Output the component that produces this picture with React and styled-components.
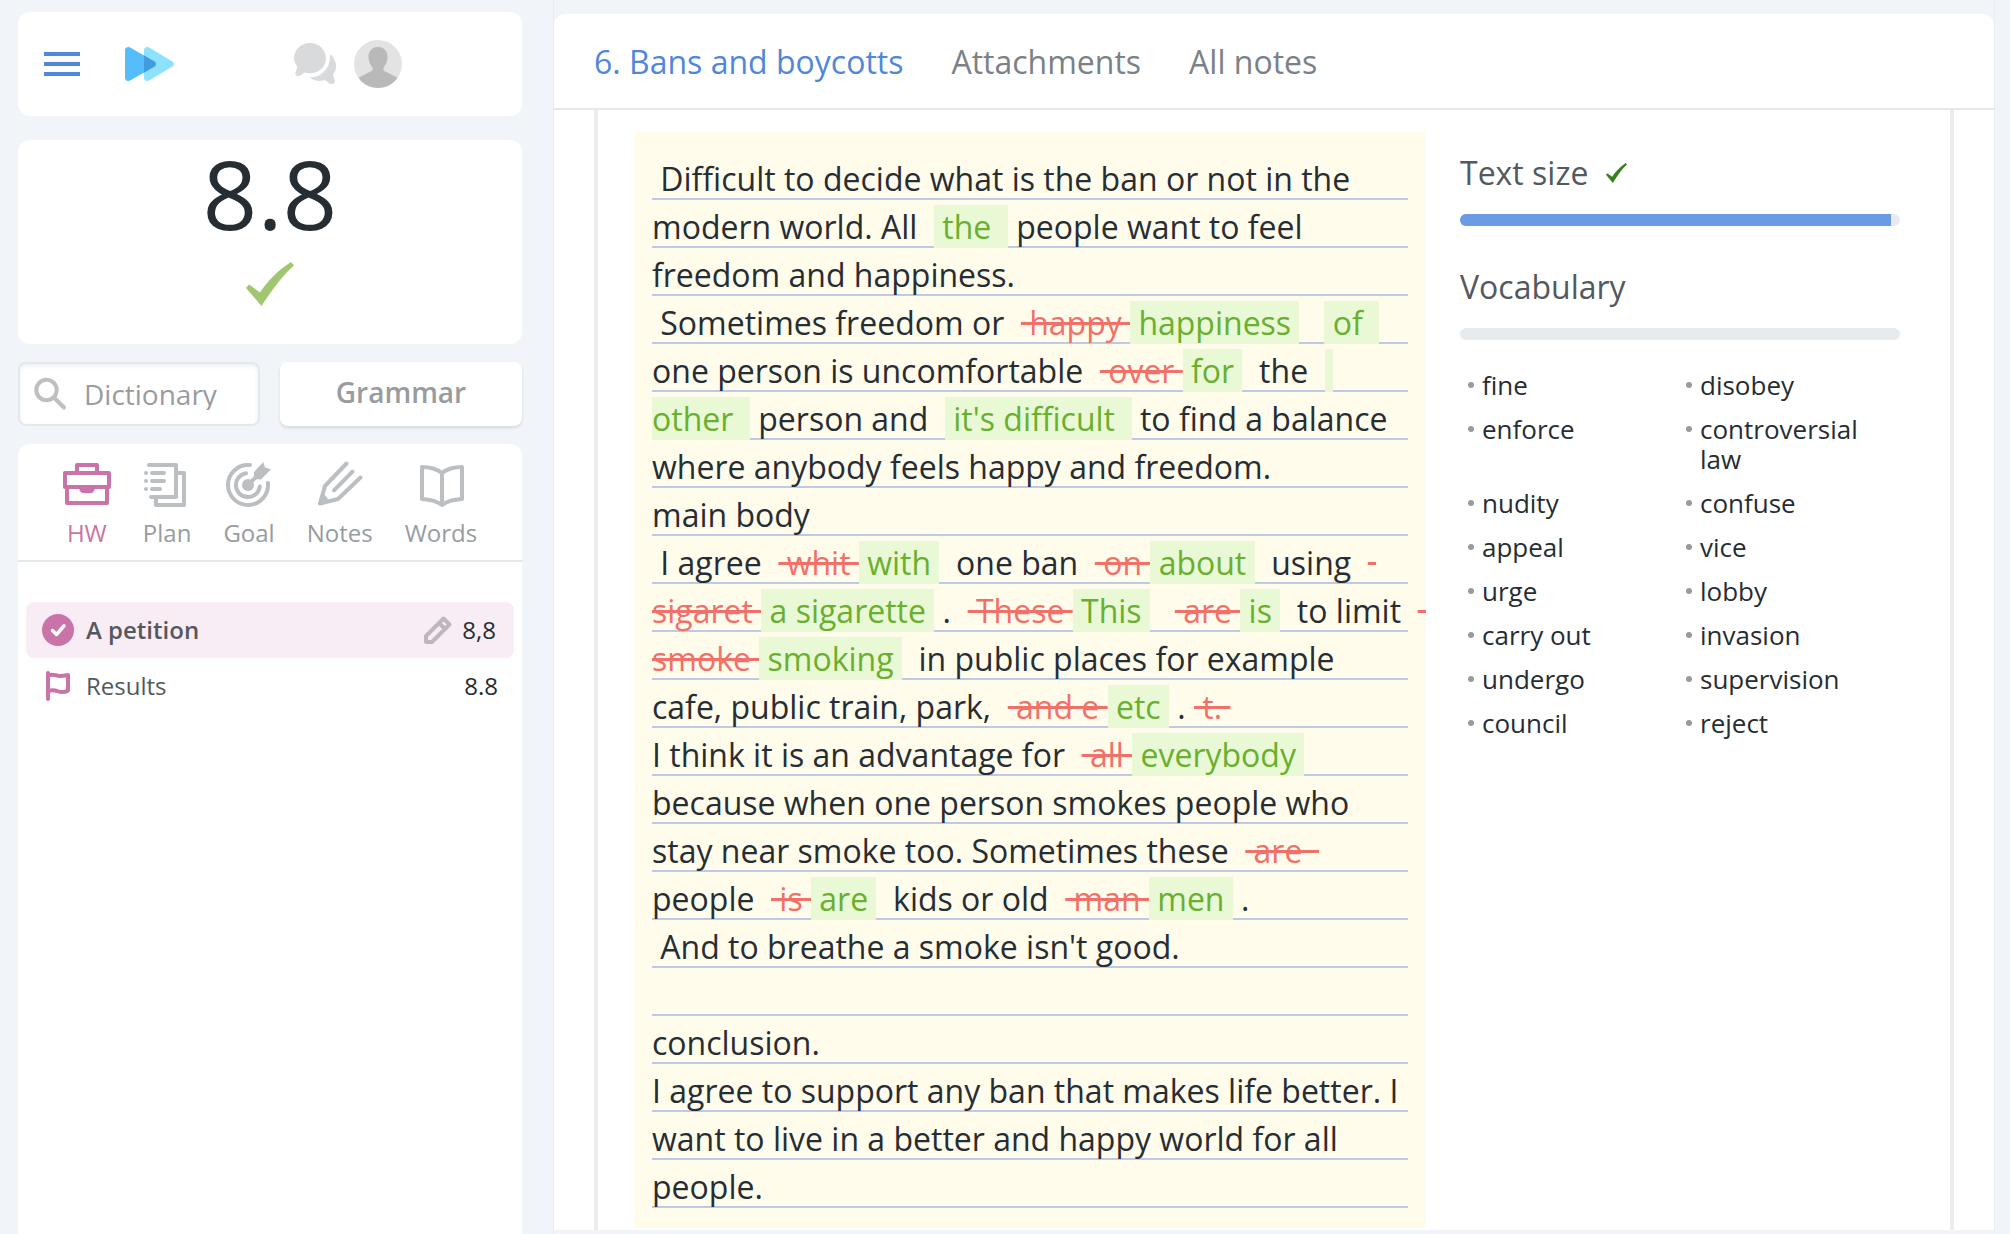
import React from "react";
import styled, { createGlobalStyle } from "styled-components";

const color = {
  page: "#f1f5fa",
  ink: "#262d33",
  heading: "#53595d",
  muted: "#989c9f",
  icon: "#bbbfc2",
  tab: "#7b8186",
  blue: "#5087d8",
  pink: "#c973a9",
  rule: "#e3e8ed",
};

const GlobalStyle = createGlobalStyle`
  *, *::before, *::after { box-sizing: border-box; }
  body {
    margin: 0;
    background: ${color.page};
    color: ${color.ink};
    font-family: "Open Sans", "Noto Sans", sans-serif;
    font-size: 24px;
    line-height: 32px;
  }
  button, input { font: inherit; color: inherit; }
  button { border: 0; padding: 0; background: none; cursor: pointer; }
  a { color: inherit; text-decoration: none; }
  ul { list-style: none; margin: 0; padding: 0; }
  svg { display: block; flex: none; }
`;

/* ---------- layout ---------- */

const Page = styled.div`
  display: grid;
  grid-template-columns: 553px minmax(0, 1fr);
  height: 100vh;
  overflow: hidden;
`;

const Sidebar = styled.aside`
  display: flex;
  flex-direction: column;
  padding: 12px 31px 0 18px;
  min-height: 0;
`;

const Card = styled.section`
  background: #fff;
  border-radius: 12px;
`;

const TopBar = styled(Card).attrs({ as: "header" })`
  display: flex;
  align-items: center;
  height: 104px;
  padding: 0 120px 0 26px;
  margin-bottom: 24px;
`;

const LogoLink = styled.a`
  margin-left: 45px;
`;

const UserActions = styled.div`
  display: flex;
  align-items: center;
  gap: 18px;
  margin-left: auto;
`;

const ScoreCard = styled(Card)`
  display: flex;
  flex-direction: column;
  align-items: center;
  gap: 16px;
  height: 204px;
  margin-bottom: 18px;
`;

const Score = styled.strong`
  font-size: 96px;
  font-weight: 400;
  line-height: 106px;
`;

const Tools = styled.div`
  display: grid;
  grid-template-columns: repeat(2, minmax(0, 1fr));
  gap: 20px;
  margin-bottom: 18px;
`;

const SearchBox = styled.label`
  display: flex;
  align-items: center;
  gap: 16px;
  height: 64px;
  padding: 0 12px 0 14px;
  border: 2px solid ${color.rule};
  border-radius: 8px;
  background: #fff;
  box-shadow: inset 0 2px 4px rgba(38, 45, 51, 0.08);
  font-size: 28px;
`;

const SearchInput = styled.input`
  flex: 1;
  min-width: 0;
  padding: 0;
  border: 0;
  outline: 0;
  background: none;
  &::placeholder { color: ${color.muted}; opacity: 1; }
`;

const GrammarButton = styled.button`
  height: 64px;
  padding-bottom: 4px;
  border-radius: 8px;
  background: #fff;
  box-shadow: 0 2px 3px rgba(38, 45, 51, 0.14);
  color: ${color.muted};
  font-size: 28px;
  font-weight: 600;
`;

const LessonCard = styled(Card)`
  flex: 1;
  border-radius: 12px 12px 0 0;
`;

const LessonNav = styled.nav`
  display: flex;
  justify-content: center;
  gap: 32px;
  padding: 17px 0 11px;
  border-bottom: 2px solid ${color.rule};
`;

const LessonTab = styled.button`
  display: flex;
  flex-direction: column;
  align-items: center;
  gap: 8px;
  color: ${(p) => (p.$active ? color.pink : color.muted)};
  line-height: 32px;
  svg { color: ${(p) => (p.$active ? color.pink : color.icon)}; }
`;

const TaskList = styled.ul`
  padding: 40px 8px 0;
`;

const Task = styled.a`
  display: flex;
  align-items: center;
  height: 56px;
  padding: 0 ${(p) => (p.$active ? 18 : 16)}px 0 16px;
  border-radius: 8px;
  background: ${(p) => (p.$active ? "#f9edf5" : "transparent")};
`;

const TaskName = styled.span`
  flex: 1;
  padding-left: 12px;
  color: ${color.heading};
  font-weight: ${(p) => (p.$active ? 600 : 400)};
`;

const TaskScore = styled.span`
  padding-left: 10px;
  color: ${color.ink};
`;

/* ---------- main area ---------- */

const Main = styled.main`
  display: flex;
  flex-direction: column;
  min-width: 0;
  min-height: 0;
  margin-right: 15px;
  padding: 14px 0 4px;
  border: solid #e9edf3;
  border-width: 0 1px;
`;

const TabBar = styled.nav`
  display: flex;
  align-items: center;
  gap: 48px;
  height: 96px;
  padding: 2px 40px 0;
  border-bottom: 2px solid ${color.rule};
  border-radius: 12px 12px 0 0;
  background: #fff;
  font-size: 32px;
  line-height: 44px;
`;

const TabLink = styled.a`
  color: ${(p) => (p.$active ? color.blue : color.tab)};
`;

const Scroller = styled.div`
  flex: 1;
  min-height: 0;
  overflow: hidden;
  padding: 0 40px;
  background: #fff;
`;

const Work = styled.article`
  display: flex;
  align-items: flex-start;
  gap: 34px;
  min-height: 100%;
  padding: 22px 50px 0 36px;
  border: solid #ececec;
  border-width: 0 4px;
`;

const Paper = styled.div`
  flex: 1;
  min-width: 0;
  padding: 23px 18px 17px;
  background-color: #fffcec;
  background-image: repeating-linear-gradient(
    transparent 0 43px,
    #bccae4 43px 45px,
    transparent 45px 48px
  );
  background-origin: content-box;
  background-size: 100% 100%;
  background-repeat: no-repeat;
  font-size: 32px;
  line-height: 48px;
`;

const Paragraph = styled.p`
  margin: 0;
  min-height: 48px;
  white-space: pre-wrap;
`;

const Added = styled.ins`
  background: #e9f9d6;
  color: #6aaf2e;
  text-decoration: none;
`;

const Removed = styled.del`
  color: #f0716a;
`;

const Stats = styled.aside`
  flex: 0 0 440px;
  padding-top: 18px;
`;

const StatTitle = styled.h2`
  display: flex;
  align-items: center;
  gap: 18px;
  margin: 0 0 18px;
  color: ${color.heading};
  font-size: 32px;
  font-weight: 400;
  line-height: 46px;
`;

const Track = styled.div`
  height: 12px;
  margin-bottom: ${(p) => (p.$last ? 30 : 38)}px;
  border-radius: 6px;
  background: #e7ebee;
  overflow: hidden;
`;

const Fill = styled.div`
  height: 100%;
  background: #6a9be4;
`;

const WordList = styled.ul`
  display: grid;
  grid-template-columns: 1fr 1fr;
  row-gap: 14px;
  padding-left: 4px;
  font-size: 26px;
  line-height: 30px;
`;

const Word = styled.li`
  display: flex;
  gap: 8px;
  padding-left: 4px;
  &::before {
    content: "";
    flex: none;
    width: 6px;
    height: 6px;
    margin-top: 12px;
    border-radius: 50%;
    background: ${color.muted};
  }
`;

/* ---------- icons ---------- */

const MenuIcon = () => (
  <svg width="36" height="24" viewBox="0 0 36 24" fill={color.blue}>
    <path d="M0 0h36v4H0zM0 10h36v4H0zM0 20h36v4H0z" />
  </svg>
);

const Logo = () => (
  <svg width="49" height="34" viewBox="0 0 49 34">
    <path d="M19 3.500Q19 0 22.500 0Q23.500 0 25 1L47.500 14.500Q49 15.500 49 17T47.500 19.500L25 33Q23.500 34 22.500 34Q19 34 19 30.500Z" fill="#8de3fd" />
    <path d="M0 3.500Q0 0 3.500 0Q4.500 0 6 1L29.500 14.500Q31 15.500 31 17T29.500 19.500L6 33Q4.500 34 3.500 34Q0 34 0 30.500Z" fill="#55bdf9" />
    <path d="M19 8.500L29.500 14.500Q31 15.500 31 17T29.500 19.500L19 25.500Z" fill="#419cdc" />
  </svg>
);

const ChatIcon = () => (
  <svg width="42" height="42" viewBox="0 0 42 42" fill="#d9dadc">
    <path d="M16 0C25 0 32 6.800 32 15.200S25 30.300 16 30.300C13.500 30.300 12 29.800 10.500 29.500C8.500 30.500 7 33 4 33C1.500 33 1 31 1.600 29C2.500 26.500 3.500 25 3 23C1 20.500 0 18 0 15.200C0 6.800 7 0 16 0Z" />
    <path d="M36 11C39.500 14 42 18.500 42 23C42 26.500 41 29 39 31.500C39 34 41 36 41 38.500C40.500 41 38 41.500 35.500 40.500C33.500 39.500 32.500 37.500 30.500 37.300C25 38.500 20 38 15.500 34.500C28 34.500 37 24.500 36 11Z" />
  </svg>
);

const Avatar = () => (
  <svg width="48" height="48" viewBox="0 0 48 48">
    <clipPath id="avatar-clip"><circle cx="24" cy="24" r="24" /></clipPath>
    <g clipPath="url(#avatar-clip)">
      <rect width="48" height="48" fill="#e3e3e3" />
      <path d="M24 7C30.500 7 33.500 11.500 33.500 17C33.500 21.500 32 24 30 27C29 28.500 29 30 30.500 31L46 39V48H2V39L17.500 31C19 30 19 28.500 18 27C16 24 14.500 21.500 14.500 17C14.500 11.500 17.500 7 24 7Z" fill="#b9b9b9" />
    </g>
  </svg>
);

const CheckMark = ({ width, height, fill }) => (
  <svg width={width} height={height} viewBox="0 0 48 44" preserveAspectRatio="none" fill={fill}>
    <path d="M0 26L3 22.500L14 30.500C21 20 31 9 45 0L48 3.500C36 14 26 28 15.500 44Z" />
  </svg>
);

const SearchIcon = () => (
  <svg width="34" height="34" viewBox="0 0 34 34" fill="none" stroke="#bdbfc1" strokeWidth="4" strokeLinecap="round">
    <circle cx="12.500" cy="13" r="10.200" />
    <path d="M20.500 21L30 30.500" />
  </svg>
);

const LineIcon = ({ children }) => (
  <svg width="48" height="48" viewBox="0 0 48 48" fill="none" stroke="currentColor" strokeWidth="4" strokeLinecap="round" strokeLinejoin="round">
    {children}
  </svg>
);

const BriefcaseIcon = () => (
  <LineIcon>
    <path d="M2 12H46V26H2ZM4 26V42H44V26M14 12V4H34V12" />
    <path d="M16 26H32C32 30 30 32 27 32H21C18 32 16 30 16 26Z" fill="currentColor" stroke="none" />
  </LineIcon>
);

const PlanIcon = () => (
  <LineIcon>
    <path d="M6 4H33V36H8M35 12H41V44H13V37M9 12H21M9 20H21M9 28H17M3 12H3.010M3 20H3.010M3 28H3.010" />
  </LineIcon>
);

const GoalIcon = () => (
  <LineIcon>
    <path d="M25 4.100A20 20 0 1 0 42.900 22M21 12.200A12 12 0 1 0 34.800 25.500M23 24L34 13" />
    <circle cx="23" cy="24" r="6" fill="currentColor" stroke="none" />
    <path d="M29 11L38.300 1L40 6.500L46 8.300L36 18.500L29 18Z" fill="currentColor" stroke="none" />
  </LineIcon>
);

const PencilsIcon = () => (
  <LineIcon>
    <path d="M30.500 2.500L9 25L4 42.500L22 38L44.500 16.500M36.500 10.700L18 29.300" />
    <path d="M4.500 34L8 33L14.500 41L2.500 44Z" fill="currentColor" stroke="none" />
  </LineIcon>
);

const BookIcon = () => (
  <LineIcon>
    <path d="M25 12C20 8 13 6 5 6V38C13 38.500 20 40 25 44C30 40 37 38.500 45 38V6C37 6 30 8 25 12V43" />
  </LineIcon>
);

const DoneIcon = () => (
  <svg width="32" height="32" viewBox="0 0 32 32">
    <circle cx="16" cy="16" r="16" fill={color.pink} />
    <path d="M10.500 16.500L14.500 20.500L22 11.800" fill="none" stroke="#fff" strokeWidth="3.500" strokeLinecap="round" strokeLinejoin="round" />
  </svg>
);

const FlagIcon = () => (
  <svg width="32" height="32" viewBox="0 0 32 32" fill="none" stroke={color.pink} strokeWidth="4" strokeLinecap="round" strokeLinejoin="round">
    <path d="M6 3V29M6 5.500C10 3.500 13 5 16 5.800C19.500 6.500 22 5.800 26 5V20.500C22 23 19 22.500 15 21C12 20 9 20 6 21.500" />
  </svg>
);

const EditIcon = () => (
  <svg width="28" height="28" viewBox="0 0 28 28" fill="none" stroke="#bdb8be" strokeWidth="4" strokeLinejoin="round">
    <path d="M2 20L19.500 2.500L25.500 8.500L8 26H2ZM15 7L21 13" />
  </svg>
);

/* ---------- content ---------- */

const lessonTabs = [
  ["HW", BriefcaseIcon],
  ["Plan", PlanIcon],
  ["Goal", GoalIcon],
  ["Notes", PencilsIcon],
  ["Words", BookIcon],
];

const topTabs = ["6. Bans and boycotts", "Attachments", "All notes"];

const words = [
  "fine", "disobey",
  "enforce", "controversial law",
  "nudity", "confuse",
  "appeal", "vice",
  "urge", "lobby",
  "carry out", "invasion",
  "undergo", "supervision",
  "council", "reject",
];

const add = (text) => ({ type: "add", text });
const del = (text) => ({ type: "del", text });

/* Each paragraph is a run of plain text, additions and deletions. */
const essay = [
  [" Difficult to decide what is the ban or not in the modern world. All  ", add(" the  "), " people want to feel freedom and happiness."],
  [" Sometimes freedom or  ", del(" happy "), add(" happiness "), "   ", add(" of  "), " one person is uncomfortable  ",
    del(" over "), add(" for "), "  the  ", add(" other  "), " person and  ", add(" it's difficult  "),
    " to find a balance where anybody feels happy and freedom."],
  ["main body"],
  [" I agree  ", del(" whit "), add(" with "), "  one ban  ", del(" on "), add(" about "), "  using  ",
    del(" sigaret "), add(" a sigarette "), " .  ", del(" These "), add(" This "), "   ", del(" are "), add(" is "),
    "  to limit  ", del(" smoke "), add(" smoking "), "  in public places for example cafe, public train, park,  ",
    del(" and e "), add(" etc "), " . ", del(" t. ")],
  ["I think it is an advantage for  ", del(" all "), add(" everybody "),
    " because when one person smokes people who stay near smoke too. Sometimes these  ", del(" are  "), "people  ",
    del(" is "), add(" are "), "  kids or old  ", del(" man "), add(" men "), " ."],
  [" And to breathe a smoke isn't good."],
  [],
  ["conclusion."],
  ["I agree to support any ban that makes life better. I want to live in a better and happy world for all people."],
];

const renderRun = (run, i) => {
  if (typeof run === "string") return run;
  return run.type === "add" ? <Added key={i}>{run.text}</Added> : <Removed key={i}>{run.text}</Removed>;
};

const Progress = ({ label, value, last }) => (
  <Track role="progressbar" aria-label={label} aria-valuenow={value} aria-valuemin={0} aria-valuemax={100} $last={last}>
    <Fill style={{ width: `${value}%` }} />
  </Track>
);

export default function App() {
  return (
    <>
      <GlobalStyle />
      <Page>
        <Sidebar>
          <TopBar>
            <button type="button" aria-label="Menu"><MenuIcon /></button>
            <LogoLink href="#home" aria-label="Home"><Logo /></LogoLink>
            <UserActions>
              <button type="button" aria-label="Messages"><ChatIcon /></button>
              <button type="button" aria-label="Profile"><Avatar /></button>
            </UserActions>
          </TopBar>

          <ScoreCard>
            <Score>8.8</Score>
            <CheckMark width={48} height={44} fill="#a0c66f" />
          </ScoreCard>

          <Tools>
            <SearchBox>
              <SearchIcon />
              <SearchInput type="text" placeholder="Dictionary" aria-label="Dictionary" />
            </SearchBox>
            <GrammarButton type="button">Grammar</GrammarButton>
          </Tools>

          <LessonCard>
            <LessonNav>
              {lessonTabs.map(([name, Icon], i) => (
                <LessonTab key={name} type="button" $active={i === 0}>
                  <Icon />
                  {name}
                </LessonTab>
              ))}
            </LessonNav>
            <TaskList>
              <li>
                <Task href="#petition" $active>
                  <DoneIcon />
                  <TaskName $active>A petition</TaskName>
                  <EditIcon />
                  <TaskScore>8,8</TaskScore>
                </Task>
              </li>
              <li>
                <Task href="#results">
                  <FlagIcon />
                  <TaskName>Results</TaskName>
                  <TaskScore>8.8</TaskScore>
                </Task>
              </li>
            </TaskList>
          </LessonCard>
        </Sidebar>

        <Main>
          <TabBar>
            {topTabs.map((name, i) => (
              <TabLink key={name} href={`#tab-${i}`} $active={i === 0}>{name}</TabLink>
            ))}
          </TabBar>
          <Scroller>
            <Work>
              <Paper>
                {essay.map((runs, i) => (
                  <Paragraph key={i}>{runs.map(renderRun)}</Paragraph>
                ))}
              </Paper>
              <Stats>
                <StatTitle>
                  Text size
                  <CheckMark width={21} height={20} fill="#38801d" />
                </StatTitle>
                <Progress label="Text size" value={98} />
                <StatTitle>Vocabulary</StatTitle>
                <Progress label="Vocabulary" value={0} last />
                <WordList>
                  {words.map((word) => <Word key={word}>{word}</Word>)}
                </WordList>
              </Stats>
            </Work>
          </Scroller>
        </Main>
      </Page>
    </>
  );
}
